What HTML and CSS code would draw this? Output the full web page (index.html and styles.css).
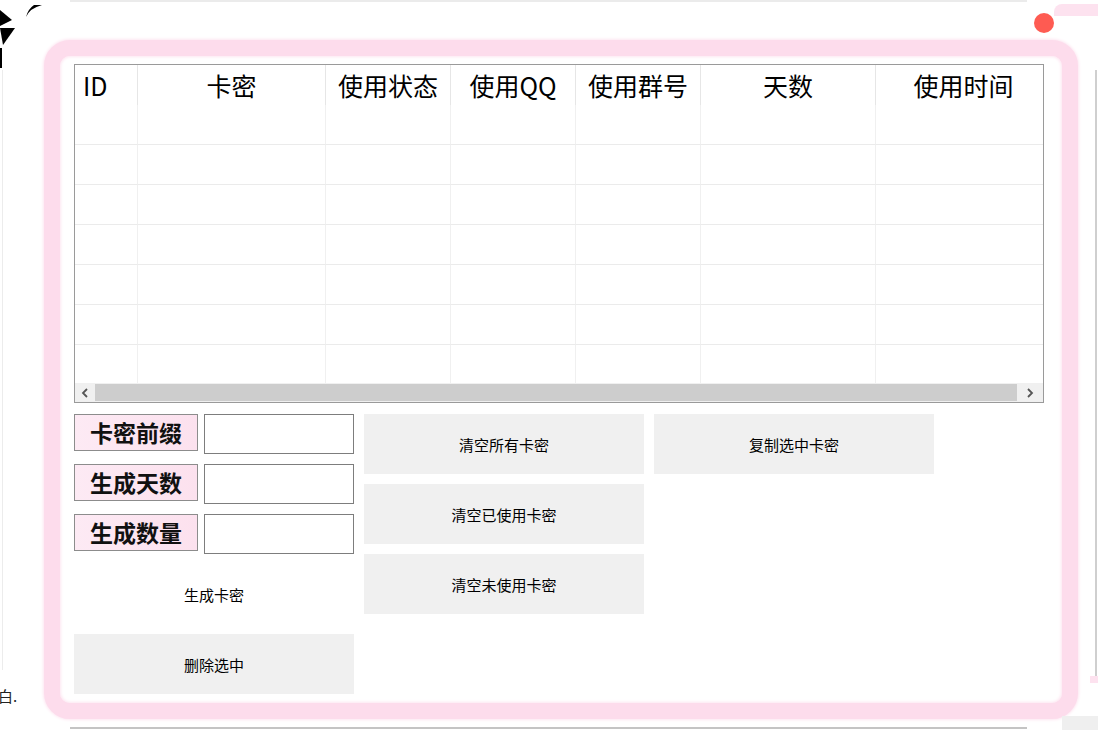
FILE: index.html
```html
<!DOCTYPE html>
<html lang="zh-CN">
<head>
<meta charset="utf-8">
<title>卡密管理</title>
<link rel="stylesheet" href="styles.css">
</head>
<body>
<div class="desk">
  <svg class="corner-art" width="50" height="70" viewBox="0 0 50 70">
    <polygon points="0,10 12,20 0,26" fill="#000"/>
    <polygon points="0,28 15,28 3,45" fill="#000"/>
    <path d="M26,17 Q30,8 42,5 L34,5 Q28,9 26,17 Z" fill="#000"/>
    <rect x="0" y="48" width="2" height="20" fill="#000"/>
  </svg>
  <div class="line-top"></div>
  <div class="line-bottom"></div>
  <div class="line-right"></div>
  <div class="line-left"></div>
  <div class="pink-top"></div>
  <div class="pink-right"></div>
  <div class="gray-block"></div>
  <span class="stray-text">白.</span>
  <span class="close-dot"></span>

  <div class="frame">
    <div class="table">
      <div class="viewport">
        <div class="grid">
          <div class="th id">ID</div>
          <div class="th">卡密</div>
          <div class="th">使用状态</div>
          <div class="th">使用QQ</div>
          <div class="th">使用群号</div>
          <div class="th">天数</div>
          <div class="th">使用时间</div>

          <div class="td"></div><div class="td"></div><div class="td"></div><div class="td"></div><div class="td"></div><div class="td"></div><div class="td"></div>
          <div class="td"></div><div class="td"></div><div class="td"></div><div class="td"></div><div class="td"></div><div class="td"></div><div class="td"></div>
          <div class="td"></div><div class="td"></div><div class="td"></div><div class="td"></div><div class="td"></div><div class="td"></div><div class="td"></div>
          <div class="td"></div><div class="td"></div><div class="td"></div><div class="td"></div><div class="td"></div><div class="td"></div><div class="td"></div>
          <div class="td"></div><div class="td"></div><div class="td"></div><div class="td"></div><div class="td"></div><div class="td"></div><div class="td"></div>
          <div class="td"></div><div class="td"></div><div class="td"></div><div class="td"></div><div class="td"></div><div class="td"></div><div class="td"></div>
          <div class="td"></div><div class="td"></div><div class="td"></div><div class="td"></div><div class="td"></div><div class="td"></div><div class="td"></div>
        </div>
      </div>
      <div class="hscroll">
        <span class="sbtn left">
          <svg width="8" height="10" viewBox="0 0 8 10"><polyline points="6,1 2,5 6,9" fill="none" stroke="#555" stroke-width="1.8"/></svg>
        </span>
        <span class="thumb"></span>
        <span class="sbtn right">
          <svg width="8" height="10" viewBox="0 0 8 10"><polyline points="2,1 6,5 2,9" fill="none" stroke="#555" stroke-width="1.8"/></svg>
        </span>
      </div>
    </div>

    <div class="controls">
      <div class="col">
        <div class="field"><span class="label">卡密前缀</span><span class="input"></span></div>
        <div class="field"><span class="label">生成天数</span><span class="input"></span></div>
        <div class="field"><span class="label">生成数量</span><span class="input"></span></div>
        <div class="btn plain">生成卡密</div>
        <div class="btn">删除选中</div>
      </div>
      <div class="col">
        <div class="btn">清空所有卡密</div>
        <div class="btn">清空已使用卡密</div>
        <div class="btn">清空未使用卡密</div>
      </div>
      <div class="col">
        <div class="btn">复制选中卡密</div>
      </div>
    </div>
  </div>
</div>
</body>
</html>
```

FILE: styles.css
```css
* { box-sizing: border-box; }

html, body {
  margin: 0;
  background: #fff;
}

body {
  width: 1098px;
  height: 730px;
  overflow: hidden;
  font-family: "Noto Sans CJK SC", "Noto Sans", sans-serif;
  color: #000;
}

.desk {
  position: relative;
  width: 1098px;
  height: 730px;
  padding: 40px 0 0 44px;
}

/* stray screenshot artefacts */
.corner-art { position: absolute; left: 0; top: 0; }
.line-top { position: absolute; left: 70px; top: 0; width: 957px; height: 2px; background: #ebebeb; }
.line-bottom { position: absolute; left: 70px; top: 727px; width: 957px; height: 2px; background: #c4c4c4; }
.line-right { position: absolute; left: 1095px; top: 70px; width: 2px; height: 613px; background: #cfcfcf; }
.line-left { position: absolute; left: 2px; top: 70px; width: 1px; height: 600px; background: #ececec; }
.pink-top { position: absolute; left: 1054px; top: 4px; width: 44px; height: 12px; background: #fde2ef; border-top-left-radius: 8px; }
.pink-right { position: absolute; left: 1090px; top: 676px; width: 8px; height: 7px; background: #fde2ef; }
.gray-block { position: absolute; left: 1062px; top: 716px; width: 36px; height: 14px; background: #efefef; }
.stray-text { position: absolute; left: -2px; top: 686px; font-size: 15px; line-height: 20px; color: #222; }

.close-dot {
  position: absolute;
  left: 1034px;
  top: 13px;
  width: 20px;
  height: 20px;
  border-radius: 50%;
  background: #fe5b52;
}

/* window frame */
.frame {
  width: 1034px;
  height: 679px;
  border: 16px solid #fddcec;
  border-radius: 26px;
  background: #fff;
  padding: 8px 0 0 14px;
  box-shadow: 0 0 3px 1px #fde6f1, inset 0 0 3px 1px #fde6f1;
}

/* data table */
.table {
  width: 970px;
  height: 339px;
  border: 1px solid #9a9a9a;
  display: flex;
  flex-direction: column;
  background: #fff;
}

.viewport {
  height: 318px;
  overflow: hidden;
}

.grid {
  display: grid;
  grid-template-columns: 63px 188px 125px 125px 125px 175px 176px;
  grid-auto-rows: 40px;
  width: 977px;
}

.th {
  font-size: 25px;
  line-height: 40px;
  text-align: center;
  white-space: nowrap;
  border-right: 1px solid #e6e6e6;
  color: #000;
}

.th.id {
  text-align: left;
  padding-left: 8px;
}

.td {
  border-right: 1px solid #f0f0f0;
  border-bottom: 1px solid #ebebeb;
}

.hscroll {
  height: 19px;
  display: flex;
  background: #f0f0f0;
}

.sbtn {
  display: flex;
  align-items: center;
  justify-content: center;
}
.sbtn.left { width: 20px; }
.sbtn.right { width: 26px; }

.thumb {
  flex: 1;
  background: #cdcdcd;
  margin: 1px 0;
}

/* controls */
.controls {
  display: flex;
  gap: 10px;
  margin-top: 11px;
}

.col {
  width: 280px;
  display: flex;
  flex-direction: column;
  gap: 10px;
}

.field {
  display: flex;
  gap: 6px;
  height: 40px;
  align-items: flex-start;
}

.label {
  width: 124px;
  height: 37px;
  border: 1px solid #8c8c8c;
  background: linear-gradient(90deg, #fdeaf4, #fce1ee);
  font-weight: bold;
  font-size: 23px;
  line-height: 34px;
  text-align: center;
  color: #111;
}

.input {
  width: 150px;
  height: 40px;
  border: 1px solid #7d7d7d;
  background: #fff;
}

.btn {
  height: 60px;
  background: #f0f0f0;
  display: flex;
  align-items: center;
  justify-content: center;
  font-size: 15px;
  color: #000;
}

.btn.plain { background: #fff; }
```
